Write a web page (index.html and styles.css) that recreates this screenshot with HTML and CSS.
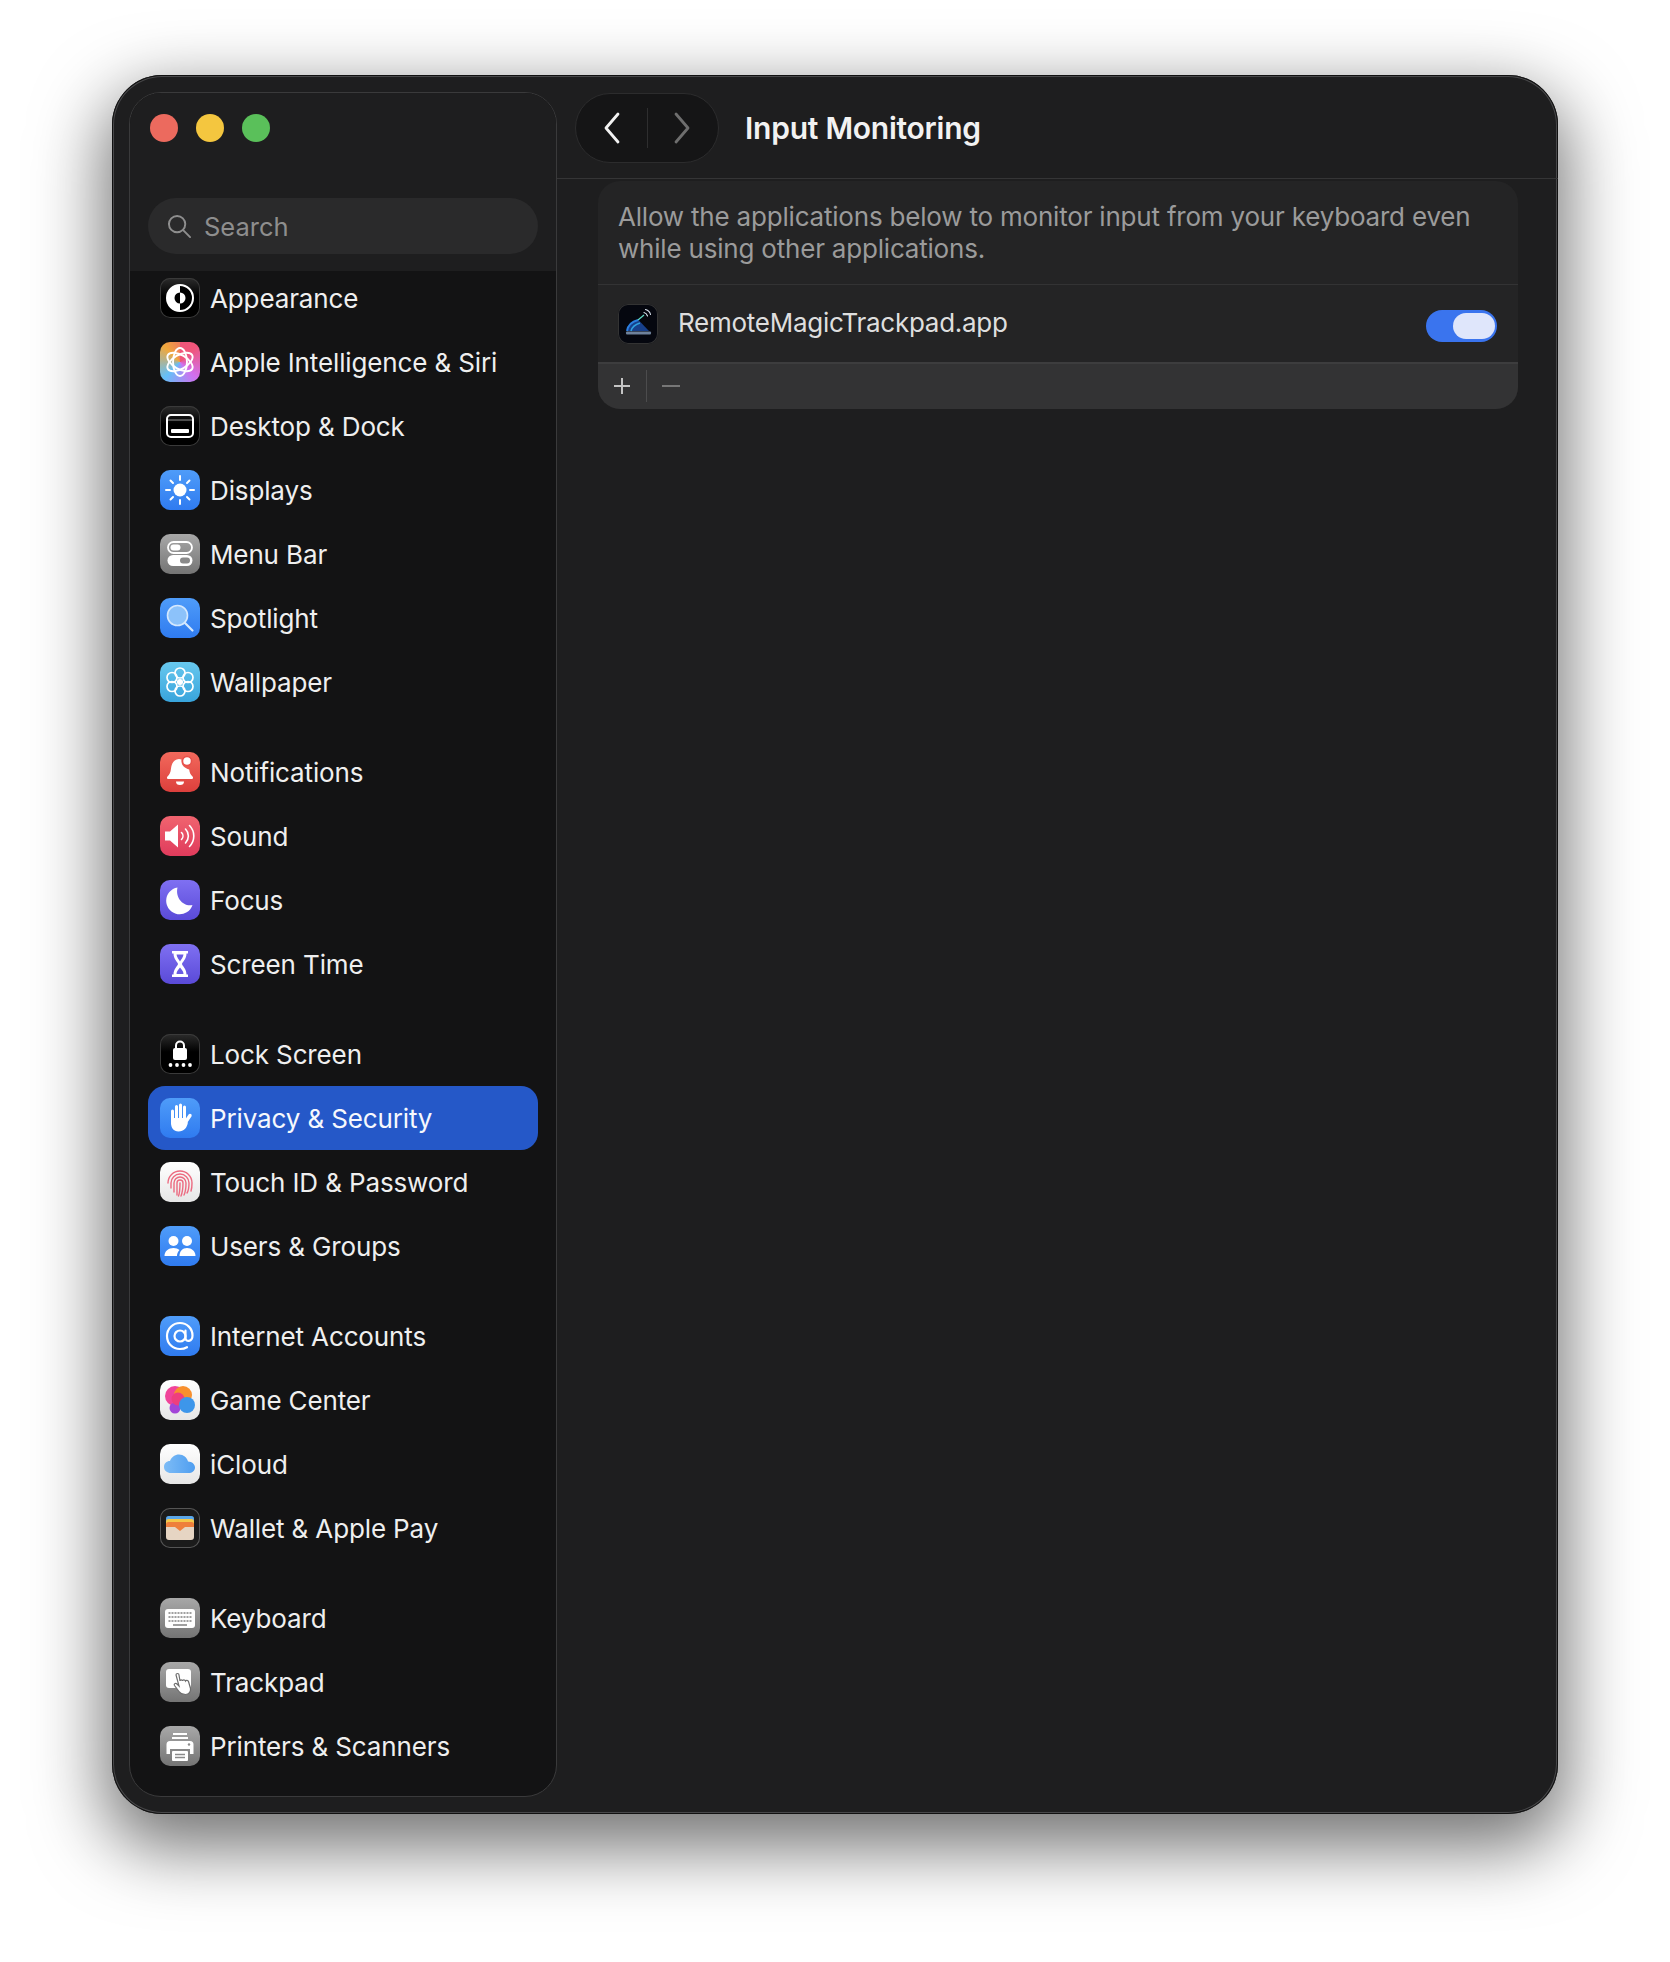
FILE: index.html
```html
<!DOCTYPE html>
<html lang="en">
<head>
    <meta charset="UTF-8">
    <title>Input Monitoring</title>
    <link rel="stylesheet" href="styles.css">
</head>
<body>

<div class="window">
    <aside class="sidebar">
        <div class="sidebar-top">
            <div class="lights">
                <span class="light light-red"></span>
                <span class="light light-yellow"></span>
                <span class="light light-green"></span>
            </div>
            <div class="search">
                <svg class="search-icon" viewBox="0 0 26 26"><circle cx="10.5" cy="10.5" r="8.5"/><path d="M16.8 16.8 24 24"/></svg>
                <span>Search</span>
            </div>
        </div>

        <nav class="nav-list">
            <div class="nav-group">
                <div class="nav-row">
                    <span class="icon icon-black"><svg viewBox="0 0 40 40"><circle cx="20" cy="20" r="13" fill="#000" stroke="#fff" stroke-width="2"/><path d="M20 7a13 13 0 0 0 0 26z" fill="#fff"/><path d="M20 14.500a5.500 5.500 0 0 0 0 11z" fill="#000"/><path d="M20 14.500a5.500 5.500 0 0 1 0 11z" fill="#fff"/></svg></span>
                    <span>Appearance</span>
                </div>
                <div class="nav-row">
                    <span class="icon icon-siri"><svg viewBox="0 0 40 40" fill="none" stroke="#fff" stroke-width="1.900"><ellipse cx="20" cy="20" rx="7" ry="14"/><ellipse cx="20" cy="20" rx="7" ry="14" transform="rotate(60 20 20)"/><ellipse cx="20" cy="20" rx="7" ry="14" transform="rotate(120 20 20)"/></svg></span>
                    <span>Apple Intelligence &amp; Siri</span>
                </div>
                <div class="nav-row">
                    <span class="icon icon-black"><svg viewBox="0 0 40 40"><rect x="7" y="9" width="26" height="22" rx="4" fill="none" stroke="#fff" stroke-width="2"/><path d="M8 14h24" stroke="#666" stroke-width="1.500"/><rect x="11" y="23" width="18" height="4" rx="1" fill="#fff"/></svg></span>
                    <span>Desktop &amp; Dock</span>
                </div>
                <div class="nav-row">
                    <span class="icon icon-blue"><svg viewBox="0 0 40 40"><circle cx="20" cy="20" r="6.500" fill="#fff"/><path d="M20 6v4M20 30v4M6 20h4M30 20h4M10.500 10.500l2.500 2.500M27 27l2.500 2.500M29.500 10.500 27 13M13 27l-2.500 2.500" stroke="#fff" stroke-width="2" stroke-linecap="round"/></svg></span>
                    <span>Displays</span>
                </div>
                <div class="nav-row">
                    <span class="icon icon-grey"><svg viewBox="0 0 40 40"><rect x="8" y="8" width="24" height="11" rx="5.500" fill="none" stroke="#fff" stroke-width="1.800"/><rect x="10.500" y="10.500" width="10" height="6" rx="3" fill="#fff"/><rect x="7.500" y="21" width="25" height="11" rx="5.500" fill="#fff"/><rect x="20" y="23.500" width="10" height="6" rx="3" fill="#8a8a8a"/></svg></span>
                    <span>Menu Bar</span>
                </div>
                <div class="nav-row">
                    <span class="icon icon-blue"><svg viewBox="0 0 40 40"><circle cx="17.500" cy="17.500" r="10" fill="#8cc2fa" stroke="#d4e8fe" stroke-width="1.600"/><path d="M25 25l7.500 7.500" stroke="#d4e8fe" stroke-width="2.200" stroke-linecap="round"/></svg></span>
                    <span>Spotlight</span>
                </div>
                <div class="nav-row">
                    <span class="icon icon-cyan"><svg viewBox="0 0 40 40" fill="none" stroke="#fff" stroke-width="1.700"><circle cx="20" cy="11" r="5"/><circle cx="20" cy="29" r="5"/><circle cx="12" cy="15.500" r="5"/><circle cx="28" cy="15.500" r="5"/><circle cx="12" cy="24.500" r="5"/><circle cx="28" cy="24.500" r="5"/><circle cx="20" cy="20" r="2.200" fill="#fff"/></svg></span>
                    <span>Wallpaper</span>
                </div>
            </div>

            <div class="nav-group">
                <div class="nav-row">
                    <span class="icon icon-red"><svg viewBox="0 0 40 40" fill="#fff"><path d="M19 7c-5 .5-7.500 4.500-8 9.500-.4 4-1.500 6-3.500 8-1 1-.5 2.500 1 2.500h23c1.500 0 2-1.500 1-2.500-2-2-3-4-3.300-7C24 16 21 13 21.500 7.500z"/><path d="M16 29.500h8a4 3.500 0 0 1-8 0z"/><circle cx="27" cy="9" r="4.500" stroke="#e8504a" stroke-width="1.500"/></svg></span>
                    <span>Notifications</span>
                </div>
                <div class="nav-row">
                    <span class="icon icon-pink"><svg viewBox="0 0 40 40"><path d="M5 15.500h5l8-7v23l-8-7H5z" fill="#fff"/><g fill="none" stroke="#fff" stroke-width="1.600" stroke-linecap="round"><path d="M21.500 16.500a5 5 0 0 1 0 7"/><path d="M25.500 13a10 10 0 0 1 0 14"/><path d="M29.500 9.500a15 15 0 0 1 0 21"/></g></svg></span>
                    <span>Sound</span>
                </div>
                <div class="nav-row">
                    <span class="icon icon-purple"><svg viewBox="0 0 40 40"><path d="M17.500 7.500A13.500 13.500 0 1 0 32.500 25c-9 2-17.500-7-15-17.500z" fill="#fff"/></svg></span>
                    <span>Focus</span>
                </div>
                <div class="nav-row">
                    <span class="icon icon-purple"><svg viewBox="0 0 40 40"><path d="M12 7h16v2.500h-1.500c0 6-4 8-4.500 10.500.5 2.500 4.500 4.500 4.500 10.500H28V33H12v-2.500h1.500c0-6 4-8 4.500-10.500-.5-2.500-4.500-4.500-4.500-10.500H12z" fill="#fff"/><path d="M16.500 10.500h7c-.3 3-2.500 5-3.500 7-1-2-3.200-4-3.500-7zM20 23.500c1.500 2 3.500 3.500 3.500 6.500h-7c0-3 2-4.500 3.500-6.500z" fill="#6a5ce4"/></svg></span>
                    <span>Screen Time</span>
                </div>
            </div>

            <div class="nav-group">
                <div class="nav-row">
                    <span class="icon icon-black"><svg viewBox="0 0 40 40" fill="#fff"><path d="M16 15v-3.500a4 4 0 0 1 8 0V15" fill="none" stroke="#fff" stroke-width="2"/><rect x="13" y="14" width="14" height="12" rx="2"/><circle cx="10.500" cy="31" r="1.900"/><circle cx="17" cy="31" r="1.900"/><circle cx="23.500" cy="31" r="1.900"/><circle cx="30" cy="31" r="1.900"/></svg></span>
                    <span>Lock Screen</span>
                </div>
                <div class="nav-row nav-row-selected">
                    <span class="icon icon-blue"><svg viewBox="0 0 40 40"><g fill="none" stroke="#fff" stroke-width="3" stroke-linecap="round"><path d="M12.500 13v12M16.500 8.500v13M20.500 7v14M24.500 9v15"/><path d="M25 25l5-7.500" stroke-width="3.400"/></g><path d="M11 20h15v5l2-1c-1 6-4 9.500-9.500 9.500-5 0-7.500-3.500-7.500-9z" fill="#fff"/></svg></span>
                    <span>Privacy &amp; Security</span>
                </div>
                <div class="nav-row">
                    <span class="icon icon-white"><svg viewBox="0 0 40 40" fill="none" stroke="#ec6a80" stroke-width="1.400" stroke-linecap="round"><path d="M8 21a12 12 0 0 1 24 0c0 3 0 5-1 8"/><path d="M11 26c0-2 0-3 0-5a9 9 0 0 1 18 0c0 4 0 7-2 10"/><path d="M14 30c0-3 0-5 0-9a6 6 0 0 1 12 0c0 4 0 8-2 12"/><path d="M17 33c0-4 0-8 0-12a3 3 0 0 1 6 0c0 4 0 8-2 13"/><path d="M20 21c0 5 0 9-1.500 13"/></svg></span>
                    <span>Touch ID &amp; Password</span>
                </div>
                <div class="nav-row">
                    <span class="icon icon-blue"><svg viewBox="0 0 40 40" fill="#fff"><circle cx="13.500" cy="15" r="5"/><circle cx="27" cy="15" r="5"/><path d="M4.500 30c0-5 4-8 9-8 2.500 0 4.500.8 6 2-1.500 1.500-2.500 3.500-2.500 6z"/><path d="M19.500 30c0-5 3-8 7.500-8s8.500 3 8.500 8z"/></svg></span>
                    <span>Users &amp; Groups</span>
                </div>
            </div>

            <div class="nav-group">
                <div class="nav-row">
                    <span class="icon icon-blue"><svg viewBox="0 0 40 40" fill="none" stroke="#fff" stroke-width="2.200" stroke-linecap="round"><circle cx="20" cy="20" r="5.500"/><path d="M25.500 14.500v7.500c0 4.500 7 4 7-2.500C32.500 12.500 27 7 20 7S7 12.500 7 20s5.500 13 13 13c3 0 5-.6 7-1.800"/></svg></span>
                    <span>Internet Accounts</span>
                </div>
                <div class="nav-row">
                    <span class="icon icon-white"><svg viewBox="0 0 40 40"><circle cx="15" cy="16" r="10" fill="#f0449a"/><circle cx="23" cy="15" r="9" fill="#f8902e"/><circle cx="15" cy="28" r="5.500" fill="#a245d8"/><circle cx="18" cy="19" r="6.500" fill="#ee3f7e"/><circle cx="27" cy="25" r="8" fill="#3d96ea"/></svg></span>
                    <span>Game Center</span>
                </div>
                <div class="nav-row">
                    <span class="icon icon-white"><svg viewBox="0 0 40 40"><defs><linearGradient id="cloud" x1="0" y1="0" x2="1" y2="0"><stop offset="0" stop-color="#7dbcf6"/><stop offset="1" stop-color="#4f9ef0"/></linearGradient></defs><path d="M11 29c-4 0-7-2.500-7-6s2.500-6 6-6c1.500-4 5-6.500 9-6.500 4.500 0 8 3 9 7 4 .3 7 2.500 7 6s-3 5.500-6.500 5.500z" fill="url(#cloud)"/></svg></span>
                    <span>iCloud</span>
                </div>
                <div class="nav-row">
                    <span class="icon icon-wallet"><svg viewBox="0 0 40 40"><rect x="6" y="8" width="28" height="10" rx="2.500" fill="#5aa6e8"/><rect x="6" y="11" width="28" height="10" rx="2.500" fill="#f5c84a"/><rect x="6" y="14" width="28" height="10" rx="2.500" fill="#ee7f3c"/><path d="M6 19h9l5 4 5-4h9v10a3 3 0 0 1-3 3H9a3 3 0 0 1-3-3z" fill="#e6d5c3"/></svg></span>
                    <span>Wallet &amp; Apple Pay</span>
                </div>
            </div>

            <div class="nav-group">
                <div class="nav-row">
                    <span class="icon icon-grey"><svg viewBox="0 0 40 40"><rect x="5" y="11" width="30" height="19" rx="3" fill="#fff"/><path d="M8.500 15h23M8.500 19h23M8.500 23h23" stroke="#a0a0a0" stroke-width="2" stroke-dasharray="2 1"/><path d="M13 27h14" stroke="#a0a0a0" stroke-width="1.800"/></svg></span>
                    <span>Keyboard</span>
                </div>
                <div class="nav-row">
                    <span class="icon icon-grey"><svg viewBox="0 0 40 40"><rect x="6" y="7" width="25" height="19" rx="3" fill="#fff"/><path d="M16 13c0-2 3-2 3 0l1 6c0-1.500 2.500-1.500 2.500 0 0-1.500 2.500-1.500 3 0 .5-1 2.500-1 3 .5l2 7c.5 3-1.500 6-5 6-3 0-5-1-6.500-3l-4.500-6c-1-1.500 1-3 2.500-1.500l2 2z" fill="#fff" stroke="#6e6e6e" stroke-width="1.200"/></svg></span>
                    <span>Trackpad</span>
                </div>
                <div class="nav-row">
                    <span class="icon icon-grey"><svg viewBox="0 0 40 40"><path d="M13 7h14v2H13zM12 11h16v2H12z" fill="#fff"/><path d="M10 15h20a3.500 3.500 0 0 1 3.500 3.500V28H30v-5H10v5H6.500v-9.500A3.500 3.500 0 0 1 10 15z" fill="#fff"/><rect x="12" y="25" width="16" height="10" rx="1" fill="#fff"/><path d="M15 28.500h10M15 31.500h10" stroke="#8a8a8a" stroke-width="1.500"/><circle cx="29" cy="18.500" r="1.200" fill="#8a8a8a"/></svg></span>
                    <span>Printers &amp; Scanners</span>
                </div>
            </div>
        </nav>
    </aside>

    <main class="main">
        <header class="header">
            <div class="nav-buttons">
                <svg class="chevron" viewBox="0 0 20 34"><path d="M16 3 4 17l12 14"/></svg>
                <span class="nav-divider"></span>
                <svg class="chevron chevron-off" viewBox="0 0 20 34"><path d="M4 3l12 14L4 31"/></svg>
            </div>
            <h1 class="title">Input Monitoring</h1>
        </header>

        <section class="panel">
            <p class="panel-desc">Allow the applications below to monitor input from your keyboard even while using other applications.</p>
            <div class="app-row">
                <span class="icon icon-app"><svg viewBox="0 0 40 40" fill="none"><path d="M9 27c1.500-6 5.500-10 11-11.500L31 27z" fill="#17408c"/><path d="M9 27c1-6 5-9.500 11-11" stroke="#2b7fe0" stroke-width="2"/><path d="M13 27c1-4 4-6.500 9-8" stroke="#2fa0e0" stroke-width="1.600"/><path d="M20 16l6-5" stroke="#5fd8c4" stroke-width="1.300"/><path d="M26 8.500c1.800.5 3 1.700 3.500 3.500M27.500 5.500c2.800.7 4.500 2.500 5 5" stroke="#dfe8f5" stroke-width="1.100" stroke-linecap="round"/><rect x="8" y="27.500" width="25" height="3" rx="1" fill="#6f829c"/></svg></span>
                <span class="app-name">RemoteMagicTrackpad.app</span>
                <span class="toggle"><span class="toggle-knob"></span></span>
            </div>
            <div class="panel-footer">
                <svg class="tool-icon" viewBox="0 0 18 18"><path d="M9 1v16M1 9h16"/></svg>
                <span class="tool-divider"></span>
                <svg class="tool-icon tool-icon-off" viewBox="0 0 18 18"><path d="M0 9h18"/></svg>
            </div>
        </section>
    </main>
</div>

</body>
</html>
```

FILE: styles.css
```css
* {
    box-sizing: border-box;
}
html, body {
    margin: 0;
    background: #fff;
}
body {
    width: 1670px;
    height: 1962px;
    padding: 75px 112px 0;
    font-family: Inter, "Liberation Sans", sans-serif;
    overflow: hidden;
}
.window {
    display: flex;
    width: 1446px;
    height: 1739px;
    background: #1e1e1f;
    border-radius: 50px;
    box-shadow: inset 0 0 0 1px #111, inset 0 0 0 2px #48484a, 0 26px 70px 8px rgba(0, 0, 0, 0.55);
}

/* sidebar */
.sidebar {
    display: flex;
    flex-direction: column;
    flex: none;
    width: 428px;
    margin: 17px 0 17px 17px;
    background: #131314;
    border: 1.500px solid #3a3a3b;
    border-radius: 32px;
    overflow: hidden;
}
.sidebar-top {
    flex: none;
    height: 178px;
    padding: 0 18px;
    background: #1e1e1f;
}
.lights {
    display: flex;
    gap: 18px;
    padding: 21px 0 0 2px;
}
.light {
    width: 28px;
    height: 28px;
    border-radius: 50%;
}
.light-red {
    background: #ec6a5e;
}
.light-yellow {
    background: #f4c63f;
}
.light-green {
    background: #5ac05a;
}
.search {
    display: flex;
    align-items: center;
    gap: 12px;
    height: 56px;
    margin-top: 56px;
    padding-left: 19px;
    background: #2a2a2b;
    border-radius: 28px;
    color: #8e8e8e;
    font-size: 25.500px;
}
.search-icon {
    width: 25px;
    height: 25px;
    fill: none;
    stroke: #8e8e8e;
    stroke-width: 2;
    stroke-linecap: round;
}
.nav-list {
    display: flex;
    flex-direction: column;
    gap: 26px;
    padding: 0 18px;
}
.nav-group:first-child {
    margin-top: -5px;
}
.nav-row {
    display: flex;
    align-items: center;
    gap: 10px;
    height: 64px;
    padding-left: 12px;
    border-radius: 17px;
    color: #efefef;
    font-size: 26px;
    letter-spacing: -0.13px;
}
.nav-row-selected {
    background: #2558c8;
    color: #f6f8fd;
}

/* app icons */
.icon {
    display: block;
    flex: none;
    width: 40px;
    height: 40px;
    border-radius: 10px;
}
.icon svg {
    display: block;
    width: 40px;
    height: 40px;
}
.icon-black {
    background: linear-gradient(#2c2c2c, #000 45%);
    box-shadow: inset 0 0 0 1px #3a3a3a;
}
.icon-siri {
    background: conic-gradient(#f0557a 45deg, #d070f0 135deg, #64c0f8 225deg, #f0a83c 315deg, #f0557a 405deg);
}
.icon-blue {
    background: linear-gradient(#4f9cf9, #2f7bf0);
}
.icon-grey {
    background: linear-gradient(#a8a8a8, #747474);
}
.icon-cyan {
    background: linear-gradient(#68c8ee, #38a4dc);
}
.icon-red {
    background: linear-gradient(#f2695c, #dc3f3c);
}
.icon-pink {
    background: linear-gradient(#f0646f, #e03b5c);
}
.icon-purple {
    background: linear-gradient(#7f70f2, #5a4ad8);
}
.icon-white {
    background: linear-gradient(#fff, #e6e6e6);
}
.icon-wallet {
    background: #1b1b1b;
    box-shadow: inset 0 0 0 1px #555;
}
.icon-app {
    background: #05070f;
    box-shadow: inset 0 0 0 1px #333;
}

/* main pane */
.main {
    display: flex;
    flex-direction: column;
    flex: 1;
    min-width: 0;
}
.header {
    display: flex;
    align-items: center;
    flex: none;
    gap: 26px;
    height: 104px;
    padding: 2px 0 0 18px;
    border-bottom: 1px solid #353536;
}
.nav-buttons {
    display: flex;
    align-items: center;
    justify-content: space-between;
    width: 144px;
    height: 70px;
    padding: 0 26px;
    background: #151516;
    border: 1px solid #2c2c2d;
    border-radius: 35px;
}
.chevron {
    width: 20px;
    height: 34px;
    fill: none;
    stroke: #f2f2f2;
    stroke-width: 2.800;
    stroke-linecap: round;
    stroke-linejoin: round;
}
.chevron-off {
    stroke: #6e6e6e;
}
.nav-divider {
    width: 1px;
    height: 40px;
    background: #2e2e2f;
}
.title {
    margin: 0;
    color: #f2f2f2;
    font-size: 30px;
    font-weight: 600;
    letter-spacing: -0.25px;
}
.panel {
    margin: 2px 40px 0 41px;
    background: #242425;
    border-radius: 22px;
    overflow: hidden;
}
.panel-desc {
    height: 103px;
    margin: 0;
    padding: 20px 19px 0 20px;
    color: #9b9b9b;
    font-size: 26px;
    line-height: 32px;
    letter-spacing: -0.2px;
}
.app-row {
    display: flex;
    align-items: center;
    height: 78px;
    padding: 0 21px 0 20px;
    border-top: 1px solid #333334;
}
.app-name {
    flex: 1;
    margin: -3px 0 0 20px;
    color: #dedede;
    font-size: 26px;
    letter-spacing: -0.27px;
}
.toggle {
    display: block;
    width: 71px;
    height: 32px;
    padding: 3px 2px 3px 27px;
    background: #3a74ee;
    border-radius: 16px;
    margin-top: 4px;
}
.toggle-knob {
    display: block;
    width: 42px;
    height: 26px;
    background: #dfe6fb;
    border-radius: 13px;
}
.panel-footer {
    display: flex;
    align-items: center;
    height: 47px;
    padding: 0 0 2px 15px;
    background: #333334;
    border-top: 2px solid #3d3d3e;
}
.tool-icon {
    width: 18px;
    height: 18px;
    fill: none;
    stroke: #c4c4c4;
    stroke-width: 2;
}
.tool-icon-off {
    stroke: #777;
}
.tool-divider {
    width: 1px;
    height: 32px;
    margin: 0 15px;
    background: #4c4c4d;
}
```
